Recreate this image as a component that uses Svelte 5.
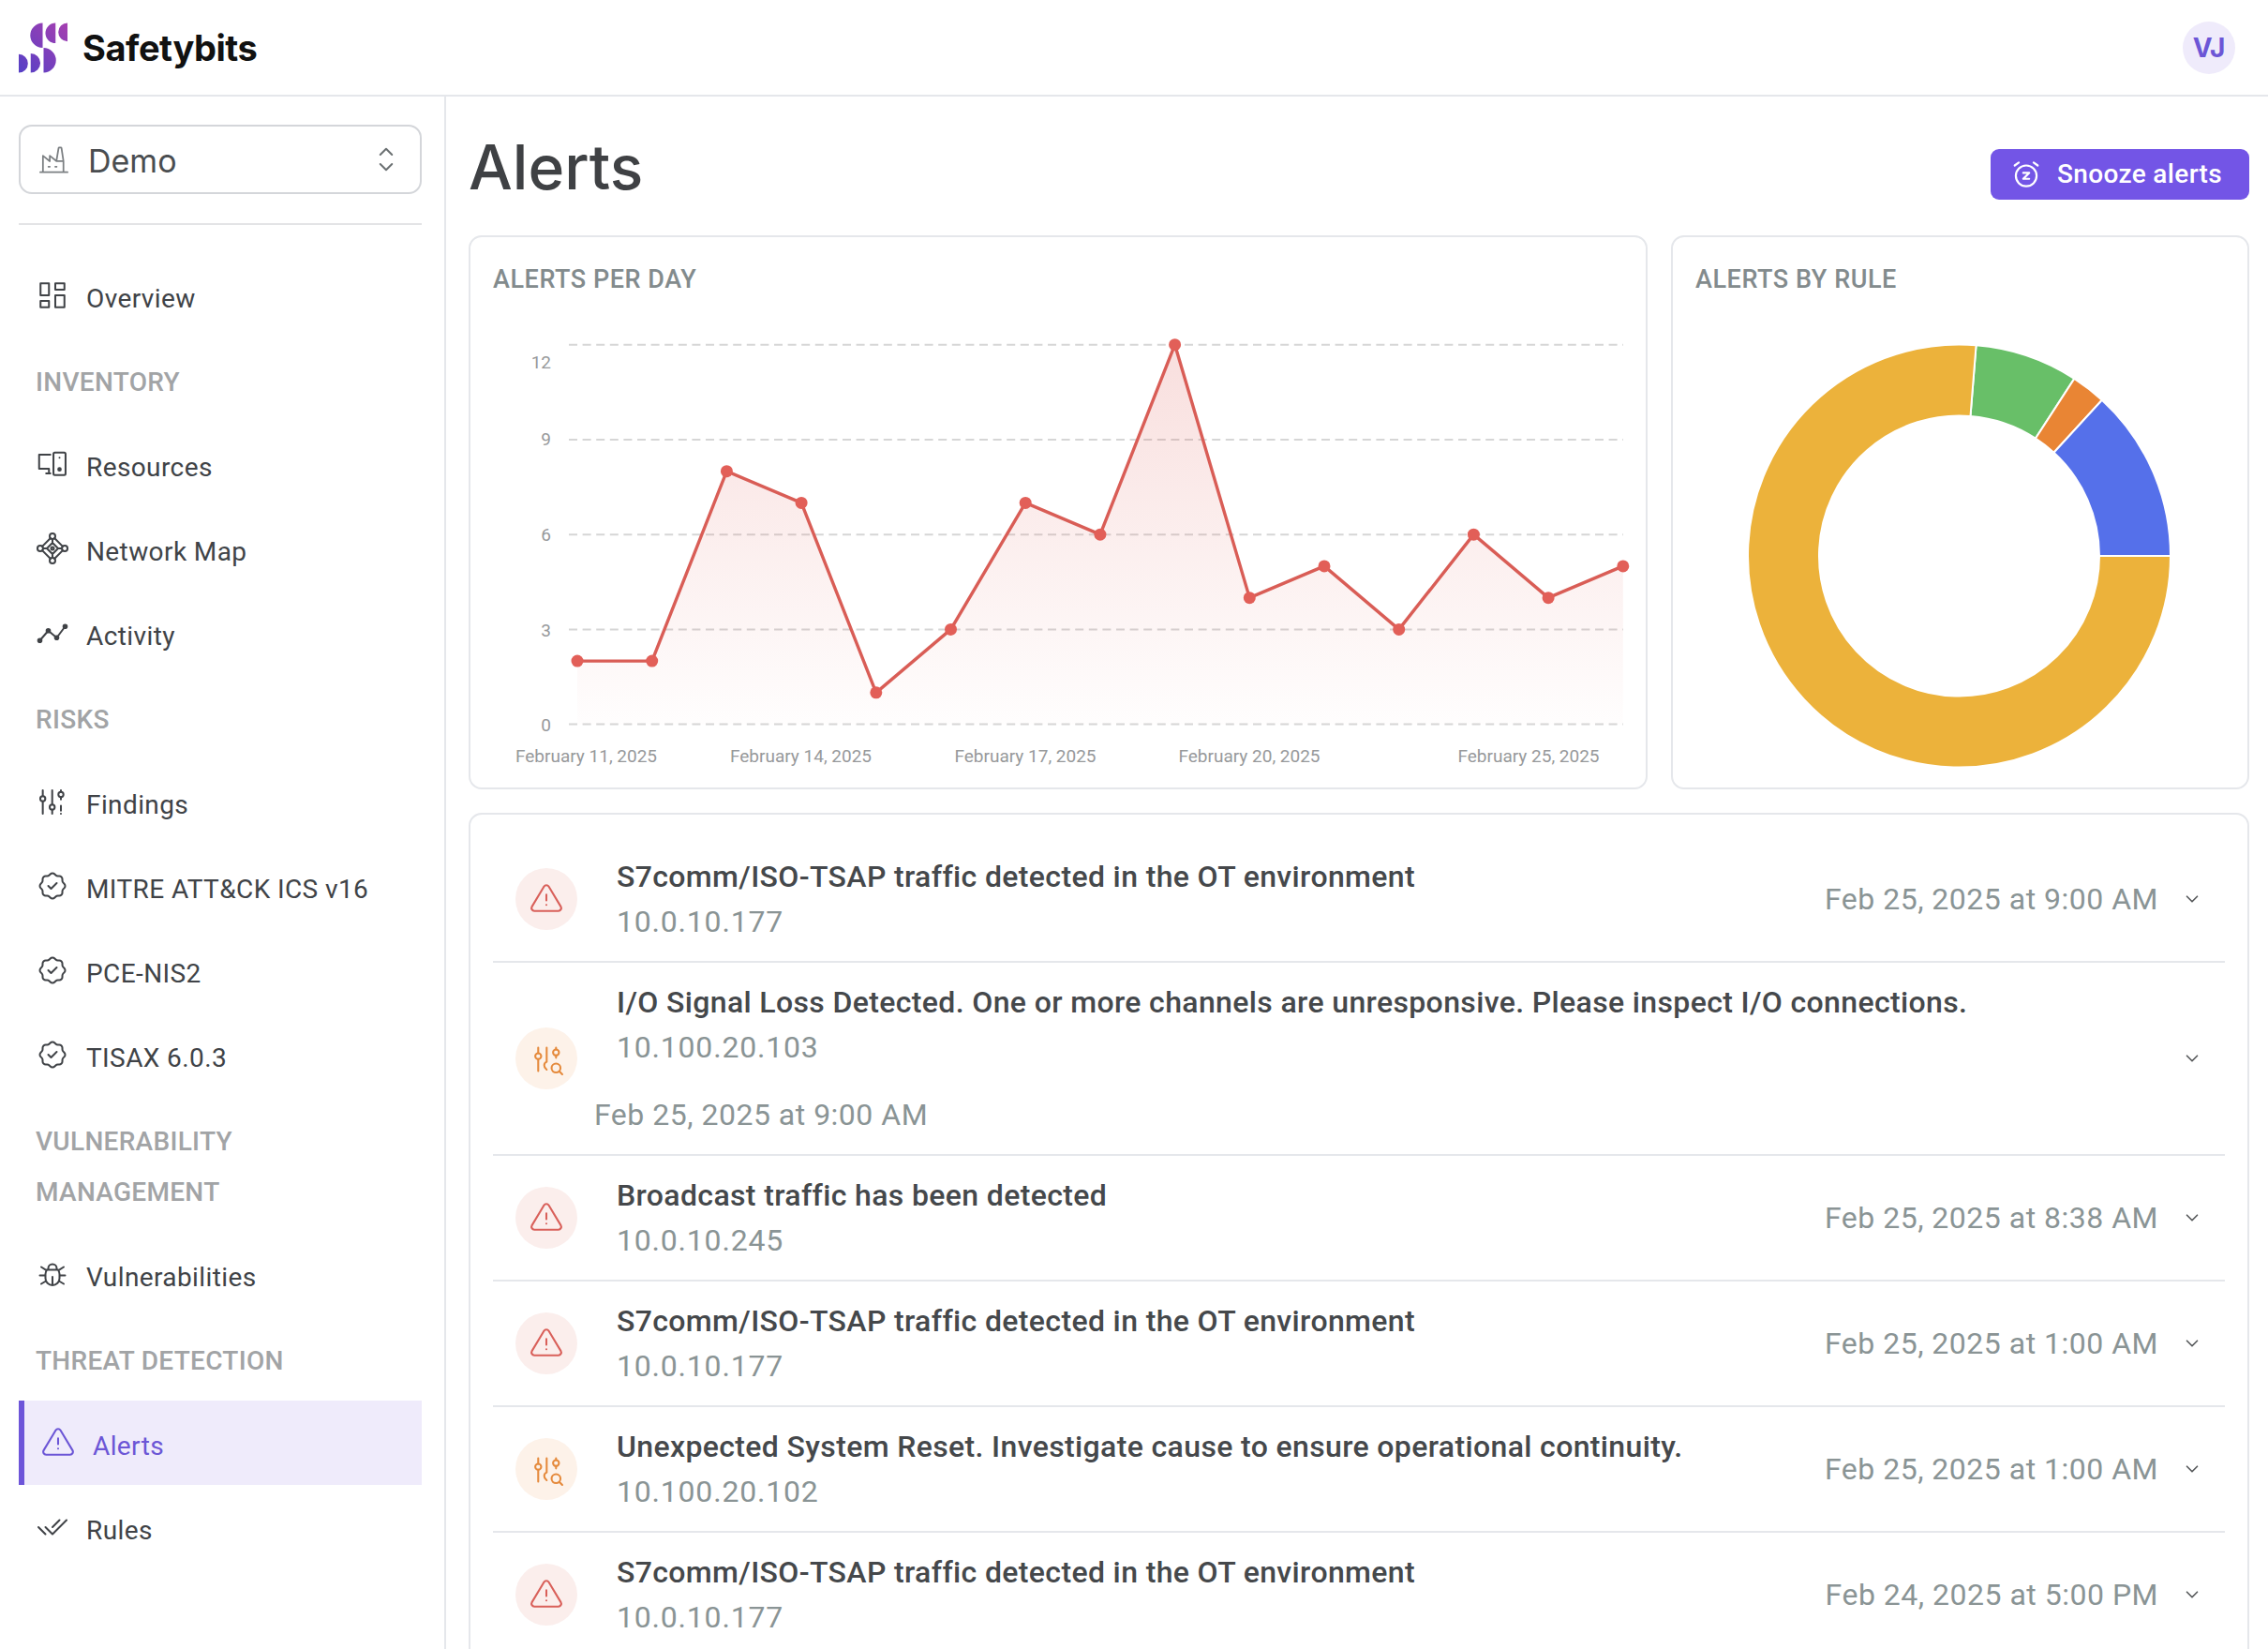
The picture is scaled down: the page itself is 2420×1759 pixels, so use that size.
<script>
  const nav = [
    { label: 'Overview', icon: 'overview' },
    { section: 'INVENTORY' },
    { label: 'Resources', icon: 'resources' },
    { label: 'Network Map', icon: 'network' },
    { label: 'Activity', icon: 'activity' },
    { section: 'RISKS' },
    { label: 'Findings', icon: 'findings' },
    { label: 'MITRE ATT&CK ICS v16', icon: 'rosette' },
    { label: 'PCE-NIS2', icon: 'rosette' },
    { label: 'TISAX 6.0.3', icon: 'rosette' },
    { section: 'VULNERABILITY MANAGEMENT' },
    { label: 'Vulnerabilities', icon: 'bug' },
    { section: 'THREAT DETECTION' },
    { label: 'Alerts', icon: 'alert', active: true },
    { label: 'Rules', icon: 'rules' }
  ];

  const alerts = [
    { kind: 'alert', title: 'S7comm/ISO-TSAP traffic detected in the OT environment', ip: '10.0.10.177', date: 'Feb 25, 2025 at 9:00 AM' },
    { kind: 'finding', title: 'I/O Signal Loss Detected. One or more channels are unresponsive. Please inspect I/O connections.', ip: '10.100.20.103', date: 'Feb 25, 2025 at 9:00 AM' },
    { kind: 'alert', title: 'Broadcast traffic has been detected', ip: '10.0.10.245', date: 'Feb 25, 2025 at 8:38 AM' },
    { kind: 'alert', title: 'S7comm/ISO-TSAP traffic detected in the OT environment', ip: '10.0.10.177', date: 'Feb 25, 2025 at 1:00 AM' },
    { kind: 'finding', title: 'Unexpected System Reset. Investigate cause to ensure operational continuity.', ip: '10.100.20.102', date: 'Feb 25, 2025 at 1:00 AM' },
    { kind: 'alert', title: 'S7comm/ISO-TSAP traffic detected in the OT environment', ip: '10.0.10.177', date: 'Feb 24, 2025 at 5:00 PM' }
  ];

  // chart, in svg units
  const values = [2, 2, 8, 7, 1, 3, 7, 6, 12, 4, 5, 3, 6, 4, 5];
  const x0 = 90, stepX = 79.7, baseY = 456.6, unitY = 33.74;
  const points = values.map((v, i) => ({ x: x0 + i * stepX, y: baseY - v * unitY }));
  const linePath = points.map((p) => p.x + ',' + p.y).join(' ');
  const areaPath = linePath + ' ' + points[14].x + ',' + baseY + ' ' + points[0].x + ',' + baseY;
  const gridY = [0, 3, 6, 9, 12].map((v) => baseY - v * unitY);
  const yLabels = [
    { t: '12', y: 77 }, { t: '9', y: 159 }, { t: '6', y: 261 }, { t: '3', y: 363 }, { t: '0', y: 464 }
  ];
  const xLabels = [
    { t: 'February 11, 2025', x: 99.5 },
    { t: 'February 14, 2025', x: 328.5 },
    { t: 'February 17, 2025', x: 568 },
    { t: 'February 20, 2025', x: 807 },
    { t: 'February 25, 2025', x: 1105 }
  ];

  // donut, angles clockwise from north
  const cx = 281.5, cy = 277, outer = 225.5, inner = 149.5;
  function slice(a, b) {
    const pt = (r, deg) => {
      const t = (deg * Math.PI) / 180;
      return (cx + r * Math.sin(t)).toFixed(2) + ' ' + (cy - r * Math.cos(t)).toFixed(2);
    };
    const large = b - a > 180 ? 1 : 0;
    return `M${pt(outer, a)} A${outer} ${outer} 0 ${large} 1 ${pt(outer, b)} L${pt(inner, b)} A${inner} ${inner} 0 ${large} 0 ${pt(inner, a)} Z`;
  }
  const slices = [
    { from: 4.6, to: 33, color: '#68bf68' },
    { from: 33, to: 42.5, color: '#e98534' },
    { from: 42.5, to: 90, color: '#5570ea' },
    { from: 90, to: 364.6, color: '#ecb23b' }
  ];
</script>

{#snippet icon(name)}
  <svg class="ico" viewBox="0 0 24 24" fill="none" stroke="currentColor" stroke-linecap="round" stroke-linejoin="round">
    {#if name === 'overview'}
      <path d="M3.500 3.500h6v8.500h-6z M3.500 16h6v4.500h-6z M14 12h6.500v8.500h-6.500z M14 3.500h6.500v4.500h-6.500z" />
    {:else if name === 'resources'}
      <path d="M10.500 5.300h-8v10h7 M7.500 18.700h3 M9.500 15.300v3.400" />
      <rect x="12.700" y="3.800" width="8.600" height="16" rx="1" />
      <path d="M17 7.500v.01" />
      <circle cx="17" cy="15.800" r=".9" fill="currentColor" />
    {:else if name === 'network'}
      <circle cx="12" cy="3.300" r="2" />
      <circle cx="12" cy="20.700" r="2" />
      <circle cx="3.300" cy="12" r="2" />
      <circle cx="20.700" cy="12" r="2" />
      <circle cx="12" cy="12" r="1" />
      <path d="M10.600 4.700l-5.900 5.900 M13.400 4.700l5.900 5.900 M10.600 19.300l-5.900 -5.900 M13.400 19.300l5.900 -5.900 M12 8l4 4l-4 4l-4 -4z M12 5.300v2.700 M12 16v2.700 M5.300 12h2.700 M16 12h2.700" />
    {:else if name === 'activity'}
      <path d="M3 17.500l6 -7l6 5l6 -8" />
      <circle cx="3" cy="17.500" r="1.200" fill="currentColor" />
      <circle cx="9" cy="10.500" r="1.200" fill="currentColor" />
      <circle cx="15" cy="15.500" r="1.200" fill="currentColor" />
      <circle cx="21" cy="7.500" r="1.200" fill="currentColor" />
    {:else if name === 'findings'}
      <circle cx="5.100" cy="10" r="1.800" />
      <path d="M5.100 4v4.200 M5.100 11.800v8.900" />
      <circle cx="11.800" cy="16" r="1.800" />
      <path d="M11.800 4v10.200 M11.800 17.800v2.900" />
      <circle cx="18" cy="7" r="1.800" />
      <path d="M18 4v1.200 M18 8.800v1.700 M18 15v3.500 M18 20.700v.01" />
    {:else if name === 'rosette'}
      <path d="M5 7.200a2.200 2.200 0 0 1 2.200 -2.200h1a2.200 2.200 0 0 0 1.550 -.64l.7 -.7a2.200 2.200 0 0 1 3.120 0l.7 .7c.412 .41 .97 .64 1.550 .64h1a2.200 2.200 0 0 1 2.200 2.200v1c0 .58 .23 1.138 .64 1.550l.7 .7a2.200 2.200 0 0 1 0 3.120l-.7 .7a2.200 2.200 0 0 0 -.64 1.550v1a2.200 2.200 0 0 1 -2.200 2.200h-1a2.200 2.200 0 0 0 -1.550 .64l-.7 .7a2.200 2.200 0 0 1 -3.120 0l-.7 -.7a2.200 2.200 0 0 0 -1.550 -.64h-1a2.200 2.200 0 0 1 -2.200 -2.200v-1a2.200 2.200 0 0 0 -.64 -1.550l-.7 -.7a2.200 2.200 0 0 1 0 -3.120l.7 -.7a2.200 2.200 0 0 0 .64 -1.550v-1" />
      <path d="M9 12l2 2l4 -4" />
    {:else if name === 'bug'}
      <path d="M9 9v-1a3 3 0 0 1 6 0v1 M8 9h8a6 6 0 0 1 1 3v3a5 5 0 0 1 -10 0v-3a6 6 0 0 1 1 -3 M3 13h4 M17 13h4 M12 20v-6 M4 19l3.350 -2 M20 19l-3.350 -2 M4 7l3.750 2.400 M20 7l-3.750 2.400" />
    {:else if name === 'alert'}
      <path d="M12 9v4 M10.363 3.591l-8.106 13.534a1.914 1.914 0 0 0 1.636 2.871h16.214a1.914 1.914 0 0 0 1.636 -2.870l-8.106 -13.536a1.914 1.914 0 0 0 -3.274 0z M12 16h.01" />
    {:else if name === 'rules'}
      <path d="M7 12l5 5l10 -10 M2 12l5 5m5 -5l5 -5" />
    {:else if name === 'finding'}
      <circle cx="6.500" cy="10.500" r="2" />
      <path d="M6.500 4.800v3.700 M6.500 12.500v8" />
      <path d="M12.200 4.800v9.500 M12.200 14.300c-2 .8 -2.400 3.400 0 5.300" />
      <circle cx="18.500" cy="8" r="2" />
      <path d="M18.500 4.800v1.200 M18.500 10v1.600" />
      <circle cx="18.500" cy="18.500" r="3" />
      <path d="M20.700 20.700l2 2" />
    {/if}
  </svg>
{/snippet}

<div class="app">
  <header class="topbar">
    <div class="brand">
      <svg class="logo" viewBox="0 0 54 54">
        <defs>
          <linearGradient id="logoGrad" x1="0" y1="1" x2="1" y2="0">
            <stop offset="0" stop-color="#5540c6" />
            <stop offset="1" stop-color="#a63fb0" />
          </linearGradient>
        </defs>
        <path fill="url(#logoGrad)" d="M26 0A13.500 13.500 0 0 0 26 27Z M40 0A11 11 0 0 0 40 22Z M53 0A10 10 0 0 0 53 20Z M0 34A10 10 0 0 1 0 54Z M13 33A10.500 10.500 0 0 1 13 54Z M27 27A13.500 13.500 0 0 1 27 54Z" />
      </svg>
      <span class="brand-name">Safetybits</span>
    </div>
    <div class="avatar">VJ</div>
  </header>

  <div class="layout">
    <aside class="sidebar">
      <div class="select">
        <svg class="factory" viewBox="0 0 24 24" fill="none" stroke="currentColor" stroke-width="1.200" stroke-linecap="round" stroke-linejoin="round">
          <path d="M2 21h20 M4 21v-12l5 4v-4l5 4h4 M19 21v-8l-1.436 -9.574a.5 .5 0 0 0 -.495 -.426h-1.145a.5 .5 0 0 0 -.494 .418l-1.430 8.582 M8 17h1 M13 17h1" />
        </svg>
        <span class="select-label">Demo</span>
        <svg class="selector" viewBox="0 0 24 24" fill="none" stroke="currentColor" stroke-width="1.600" stroke-linecap="round" stroke-linejoin="round">
          <path d="M7 8l5 -5l5 5 M17 16l-5 5l-5 -5" />
        </svg>
      </div>
      <div class="divider"></div>

      <nav>
        {#each nav as item}
          {#if item.section}
            <div class="section">{item.section}</div>
          {:else}
            <div class="item" class:active={item.active}>
              {@render icon(item.icon)}
              <span>{item.label}</span>
            </div>
          {/if}
        {/each}
      </nav>
    </aside>

    <main>
      <div class="page-head">
        <h1>Alerts</h1>
        <button class="snooze">
          <svg viewBox="0 0 24 24" fill="none" stroke="currentColor" stroke-width="1.400" stroke-linecap="round" stroke-linejoin="round">
            <path d="M5 13a7 7 0 1 0 14 0a7 7 0 1 0 -14 0 M10 11h4l-4 4h4 M7 4l-2.750 2 M17 4l2.750 2" />
          </svg>
          Snooze alerts
        </button>
      </div>

      <div class="charts">
        <section class="card">
          <h2>ALERTS PER DAY</h2>
          <svg class="plot" viewBox="0 0 1206 500">
            <defs>
              <linearGradient id="areaGrad" x1="0" y1="0" x2="0" y2="1">
                <stop offset="0" stop-color="#df5d57" stop-opacity="0.2" />
                <stop offset="1" stop-color="#df5d57" stop-opacity="0.01" />
              </linearGradient>
            </defs>
            {#each gridY as y}
              <line x1="81" x2="1206" y1={y} y2={y} stroke="#d6d6d6" stroke-width="2" stroke-dasharray="9 5.600" />
            {/each}
            <polygon points={areaPath} fill="url(#areaGrad)" />
            <polyline points={linePath} fill="none" stroke="#d95d56" stroke-width="3.400" stroke-linejoin="round" />
            {#each points as p}
              <circle cx={p.x} cy={p.y} r="6.500" fill="#e25f58" />
            {/each}
            {#each yLabels as l}
              <text class="axis" x="62" y={l.y} text-anchor="end">{l.t}</text>
            {/each}
            {#each xLabels as l}
              <text class="axis" x={l.x} y="497" text-anchor="middle">{l.t}</text>
            {/each}
          </svg>
        </section>

        <section class="card">
          <h2>ALERTS BY RULE</h2>
          <svg class="plot" viewBox="0 0 565 500">
            {#each slices as s}
              <path d={slice(s.from, s.to)} fill={s.color} stroke="#fff" stroke-width="2" />
            {/each}
          </svg>
        </section>
      </div>

      <section class="card list">
        {#each alerts as a}
          <div class="row">
            <div class="badge" class:finding={a.kind === 'finding'}>
              {@render icon(a.kind)}
            </div>
            <div class="row-body">
              <div class="row-text">
                <div class="row-title">{a.title}</div>
                <div class="row-ip">{a.ip}</div>
              </div>
              <div class="row-date">{a.date}</div>
            </div>
            <svg class="chevron" viewBox="0 0 24 24" fill="none" stroke="currentColor" stroke-width="1.800" stroke-linecap="round" stroke-linejoin="round">
              <path d="M6 9l6 6l6 -6" />
            </svg>
          </div>
        {/each}
      </section>
    </main>
  </div>
</div>

<style>
  :global(body) {
    margin: 0;
    background: #fff;
    font-family: Roboto, "Noto Sans", sans-serif;
    color: #404347;
  }

  .app {
    height: 100vh;
    overflow: hidden;
    display: flex;
    flex-direction: column;
  }

  .topbar {
    flex: none;
    height: 101px;
    border-bottom: 2px solid #e5e7eb;
    display: flex;
    align-items: center;
    justify-content: space-between;
    padding: 0 35px 0 20px;
  }

  .brand {
    display: flex;
    align-items: center;
    gap: 15px;
  }

  .logo {
    width: 53px;
    height: 54px;
  }

  .brand-name {
    font-family: Inter, sans-serif;
    font-size: 38px;
    font-weight: 700;
    letter-spacing: -0.45px;
    color: #111;
  }

  .avatar {
    width: 56px;
    height: 56px;
    border-radius: 50%;
    background: #efebfb;
    color: #6c56d6;
    font-family: Inter, sans-serif;
    font-size: 28px;
    font-weight: 700;
    display: flex;
    align-items: center;
    justify-content: center;
  }

  .layout {
    flex: 1;
    display: flex;
    min-height: 0;
  }

  .sidebar {
    flex: none;
    width: 476px;
    box-sizing: border-box;
    border-right: 2px solid #e5e7eb;
    padding: 30px 24px 0 20px;
  }

  .select {
    height: 74px;
    box-sizing: border-box;
    border: 2px solid #d4d6da;
    border-radius: 14px;
    display: flex;
    align-items: center;
    padding: 0 21px 0 18px;
    gap: 19px;
  }

  .factory {
    width: 35px;
    height: 35px;
    flex: none;
    color: #7b7f82;
  }

  .select-label {
    flex: 1;
    padding-top: 2px;
    font-family: Inter, sans-serif;
    font-size: 34px;
    color: #4a4d50;
  }

  .selector {
    width: 30px;
    height: 30px;
    flex: none;
    color: #6b7072;
  }

  .divider {
    height: 2px;
    background: #e3e4e6;
    margin: 31px 0 30px;
  }

  .section {
    padding: 21px 40px 15px 18px;
    line-height: 54px;
    font-size: 28px;
    font-weight: 500;
    color: #a2a4a6;
    letter-spacing: 0.3px;
  }

  .item {
    height: 90px;
    display: flex;
    align-items: center;
    padding-left: 18px;
    gap: 18px;
    font-size: 28px;
    color: #404347;
    letter-spacing: 0.4px;
  }

  .item span {
    padding-top: 6px;
  }

  .item .ico {
    width: 36px;
    height: 36px;
    flex: none;
    stroke-width: 1.35;
  }

  .item.active {
    background: #efebfb;
    border-left: 6px solid #6d55d9;
    color: #6c56d6;
    padding-left: 17px;
    gap: 18px;
  }

  .item.active .ico {
    width: 38px;
    height: 38px;
    stroke-width: 1.3;
  }

  main {
    flex: 1;
    min-width: 0;
    padding: 0 20px 0 24px;
  }

  .page-head {
    height: 148px;
    display: flex;
    align-items: center;
    justify-content: space-between;
  }

  h1 {
    margin: 0;
    padding-top: 2px;
    font-family: Inter, sans-serif;
    font-size: 66px;
    font-weight: 500;
    color: #3f4144;
  }

  .snooze {
    width: 276px;
    height: 54px;
    margin-top: 17px;
    padding: 0 0 0 19px;
    border: none;
    border-radius: 9px;
    background: #7355e6;
    color: #fff;
    font-family: Roboto, sans-serif;
    font-size: 28px;
    font-weight: 500;
    letter-spacing: 0.35px;
    display: flex;
    align-items: center;
    gap: 14px;
  }

  .snooze svg {
    width: 38px;
    height: 38px;
    flex: none;
  }

  .charts {
    display: grid;
    grid-template-columns: 1258px 1fr;
    gap: 25px;
  }

  .card {
    border: 2px solid #e5e7eb;
    border-radius: 14px;
    padding: 24px;
    background: #fff;
    min-width: 0;
  }

  h2 {
    margin: 0;
    padding-top: 3px;
    font-size: 27px;
    line-height: 36px;
    font-weight: 500;
    letter-spacing: 0.55px;
    color: #838b8d;
  }

  .plot {
    display: block;
    width: 100%;
    height: 500px;
    overflow: visible;
  }

  .axis {
    font-family: Roboto, sans-serif;
    font-size: 19px;
    fill: #97999b;
  }

  .list {
    margin-top: 25px;
  }

  .row {
    display: flex;
    align-items: center;
    padding: 18px 24px;
    border-bottom: 2px solid #e5e7eb;
  }

  .badge {
    flex: none;
    width: 66px;
    height: 66px;
    border-radius: 50%;
    background: #fbeeec;
    color: #d9605a;
    display: flex;
    align-items: center;
    justify-content: center;
    margin-right: 18px;
  }

  .badge.finding {
    background: #fdf2e9;
    color: #e58a3c;
  }

  .badge .ico {
    width: 38px;
    height: 38px;
    stroke-width: 1.3;
  }

  .row-body {
    flex: 1;
    min-width: 0;
    display: flex;
    flex-wrap: wrap;
    align-items: center;
    justify-content: space-between;
    row-gap: 24px;
  }

  .row-text {
    padding-left: 24px;
  }

  .row-title {
    font-size: 32px;
    line-height: 48px;
    font-weight: 500;
    letter-spacing: 0.36px;
    color: #45484b;
  }

  .row-ip,
  .row-date {
    font-size: 32px;
    line-height: 48px;
    color: #8a9495;
  }

  .row-ip {
    letter-spacing: 0.8px;
  }

  .row-date {
    letter-spacing: 0.5px;
  }

  .chevron {
    flex: none;
    width: 22px;
    height: 22px;
    margin-left: 25px;
    color: #55585a;
  }
</style>
